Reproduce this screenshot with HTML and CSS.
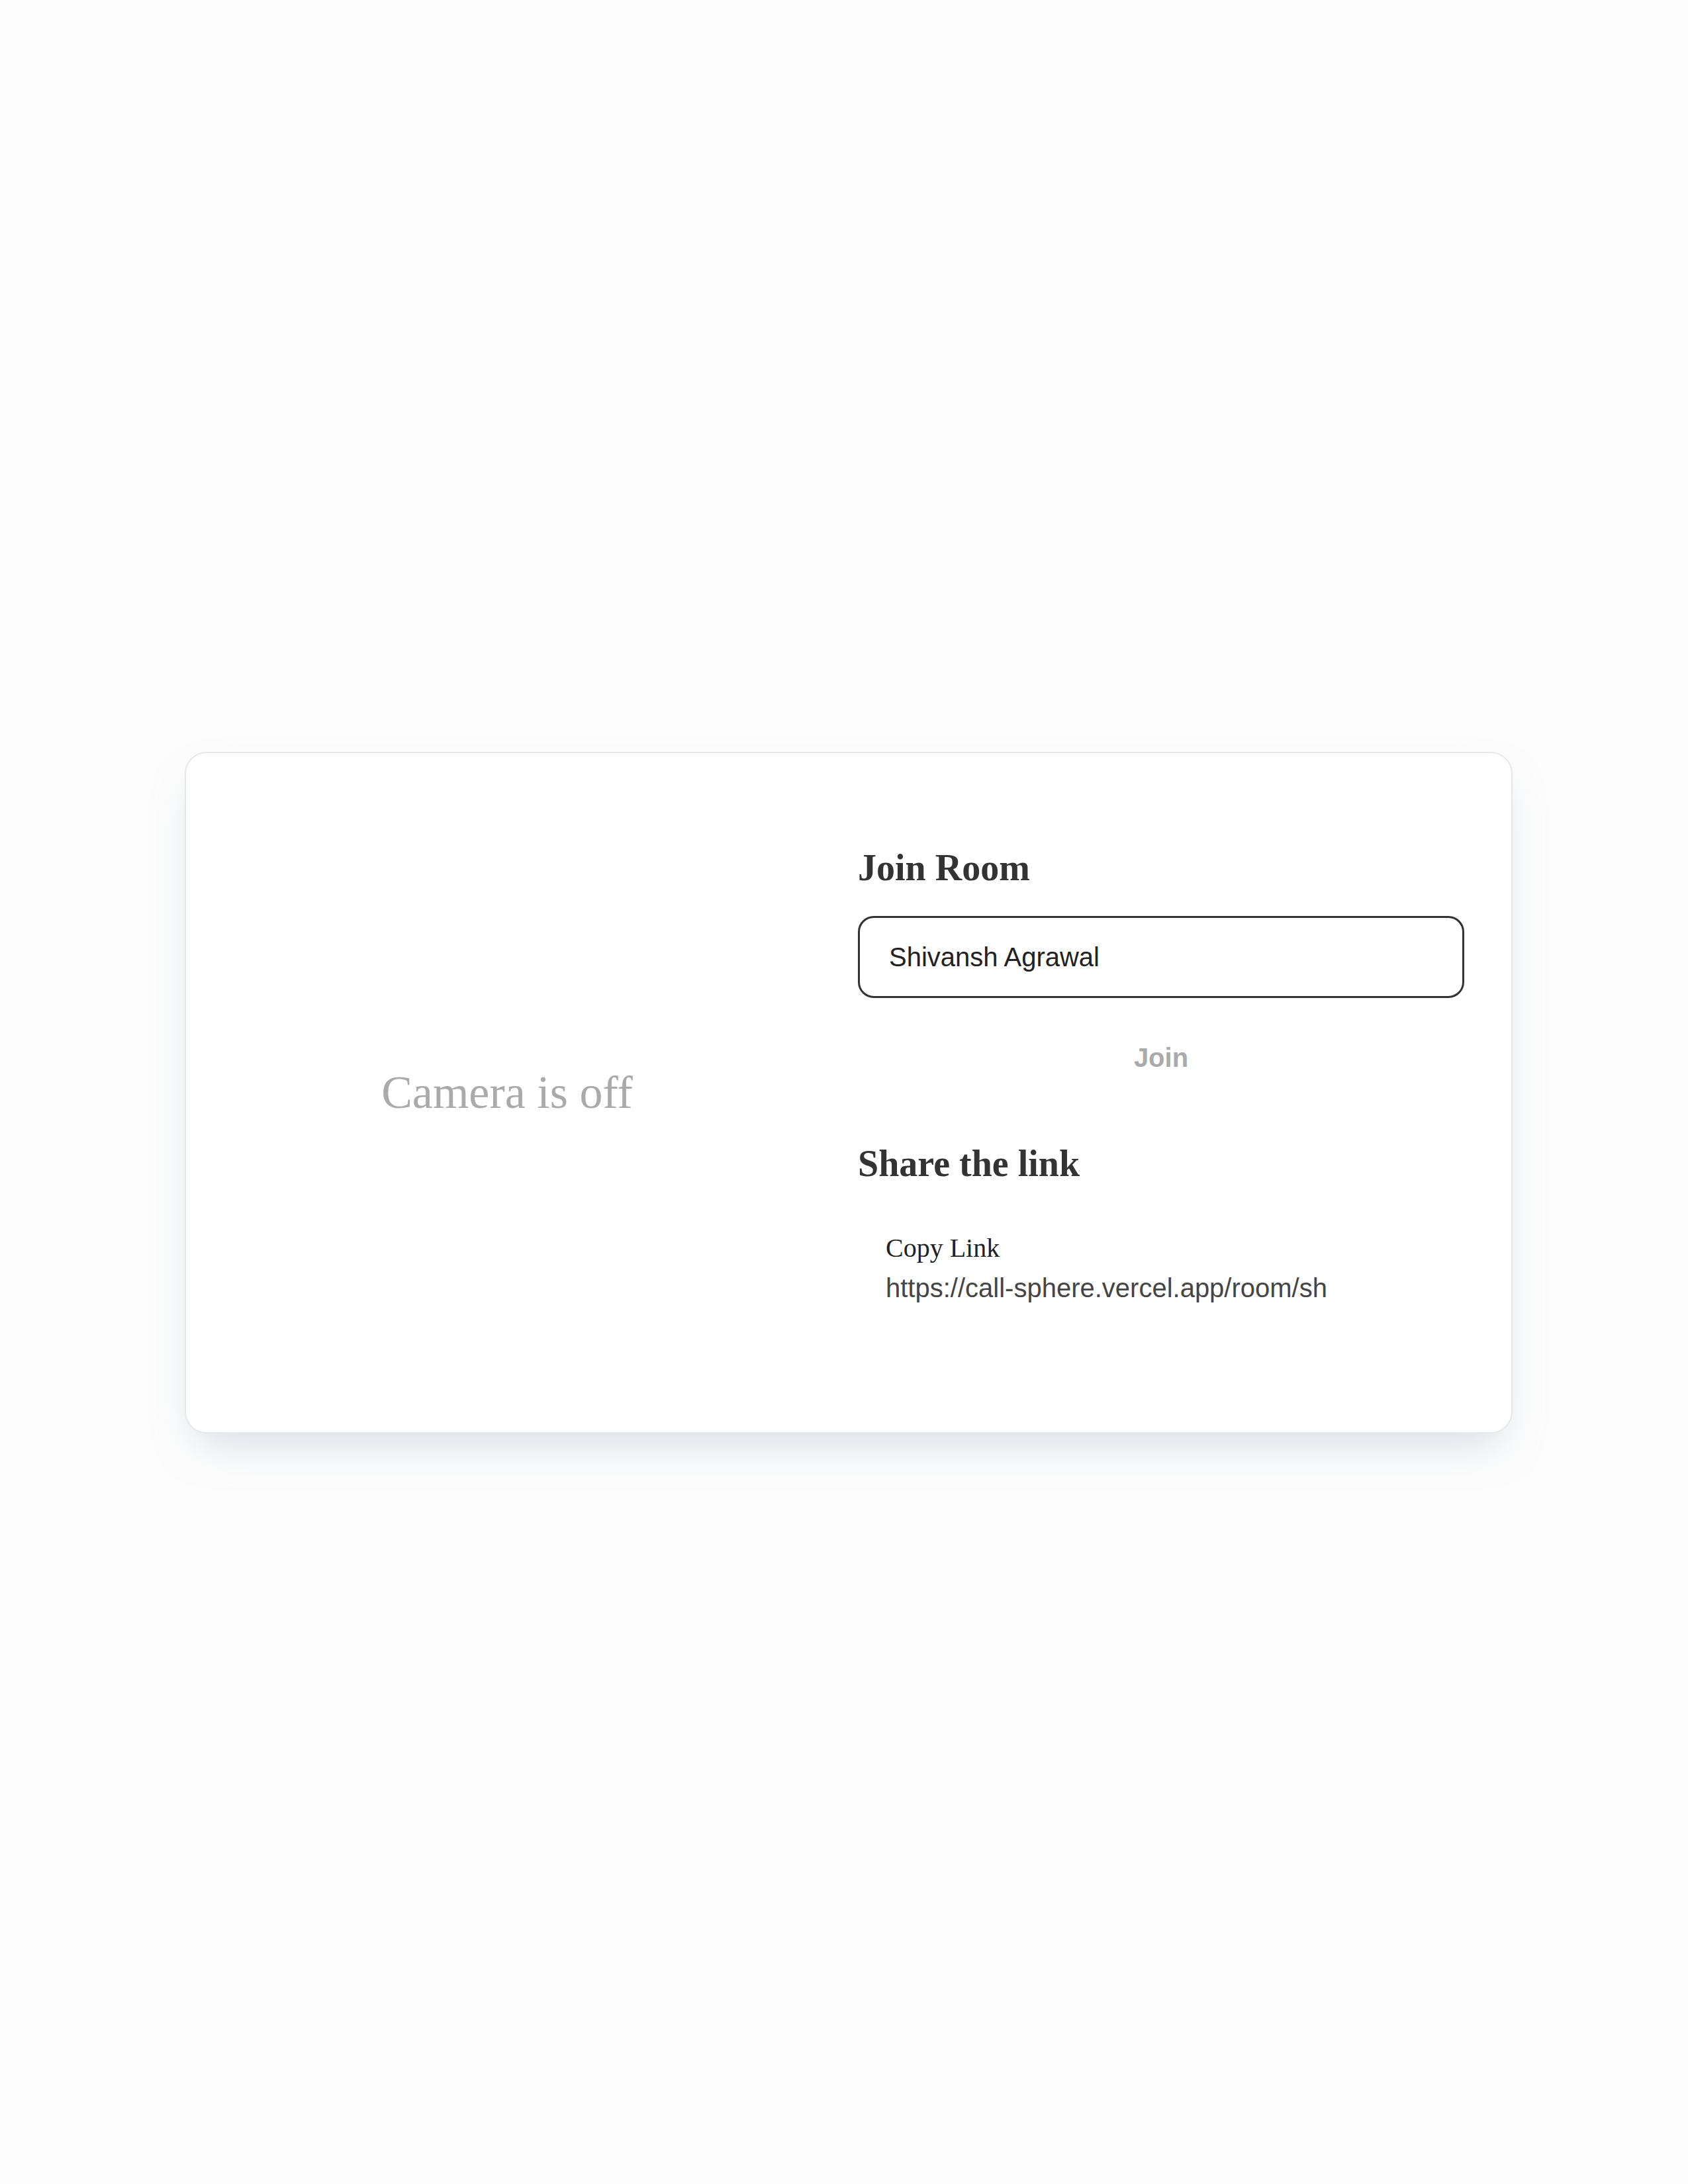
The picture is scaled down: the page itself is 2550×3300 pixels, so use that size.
FILE: index.html
```html
<!DOCTYPE html>
<html lang="en">
<head>
<meta charset="utf-8">
<title>Join Room</title>
<link rel="stylesheet" href="styles.css">
</head>
<body>
  <main class="page">
    <section class="card">
      <div class="preview">
        <p class="camera-off">Camera is off</p>
      </div>
      <div class="panel">
        <h2 class="title">Join Room</h2>
        <input class="name-input" type="text" value="Shivansh Agrawal">
        <button class="join-btn" type="button" disabled>Join</button>
        <h2 class="title share-title">Share the link</h2>
        <div class="share">
          <div class="copy-label">Copy Link</div>
          <div class="link-text">https://call-sphere.vercel.app/room/sh</div>
        </div>
      </div>
    </section>
  </main>
</body>
</html>
```

FILE: styles.css
```css
html, body {
  margin: 0;
  padding: 0;
  background: #fdfdfd;
}

.page {
  min-height: 3300px;
  box-sizing: border-box;
  padding-left: 14px;
  padding-top: 2px;
  display: flex;
  align-items: center;
  justify-content: center;
}

.card {
  width: 2006px;
  box-sizing: border-box;
  background: #ffffff;
  border: 2px solid #e5e7eb;
  border-radius: 33px;
  padding: 64px;
  box-shadow: 0 32px 64px -16px rgba(148, 163, 184, 0.34);
  display: grid;
  grid-template-columns: 842px 916px;
  column-gap: 109px;
}

.preview {
  display: flex;
  align-items: center;
  justify-content: center;
}

.camera-off {
  margin: 0;
  font-family: "Liberation Serif", "Times New Roman", serif;
  font-size: 70px;
  line-height: 80px;
  color: #aaaaaa;
}

.panel {
  display: flex;
  flex-direction: column;
  padding-top: 77px;
  padding-bottom: 130px;
}

.title {
  margin: 0;
  font-family: "Liberation Serif", "Times New Roman", serif;
  font-weight: 700;
  font-size: 56px;
  line-height: 64px;
  color: #333333;
}

.name-input {
  margin: 41px 0 0 0;
  height: 124px;
  box-sizing: border-box;
  width: 100%;
  border: 3px solid #333333;
  border-radius: 24px;
  padding: 0 44px;
  font-family: "Liberation Sans", Arial, sans-serif;
  font-size: 40px;
  color: #222222;
  background: #ffffff;
  outline: none;
}

.join-btn {
  margin: 42px 0 0 0;
  padding: 24px 0;
  border: none;
  background: transparent;
  font-family: "Liberation Sans", Arial, sans-serif;
  font-weight: 700;
  font-size: 40px;
  line-height: 48px;
  color: #aaaaaa;
  text-align: center;
  width: 100%;
}

.share-title {
  margin-top: 80px;
}

.share {
  margin-top: 72px;
  padding-left: 42px;
  display: flex;
  flex-direction: column;
  gap: 12px;
}

.copy-label {
  font-family: "Liberation Serif", "Times New Roman", serif;
  font-size: 40px;
  line-height: 48px;
  color: #222222;
}

.link-text {
  font-family: "Liberation Sans", Arial, sans-serif;
  font-size: 40px;
  line-height: 48px;
  color: #454545;
  white-space: nowrap;
  overflow: hidden;
}
```
